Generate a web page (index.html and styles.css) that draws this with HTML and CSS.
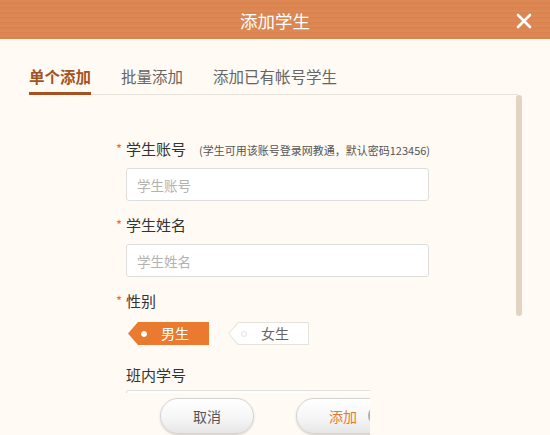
FILE: index.html
```html
<!DOCTYPE html>
<html lang="zh-CN">
<head>
<meta charset="utf-8">
<title>添加学生</title>
<link rel="stylesheet" href="styles.css">
</head>
<body>
<div class="dialog">
  <header class="hd">
    <span></span>
    <h1 class="title">添加学生</h1>
    <button class="close" aria-label="关闭">
      <svg width="16" height="16" viewBox="0 0 16 16"><path d="M2 2 L14 14 M14 2 L2 14" stroke="#fff" stroke-width="2.6" stroke-linecap="round"/></svg>
    </button>
  </header>
  <nav class="tabs">
    <a class="tab active">单个添加</a>
    <a class="tab">批量添加</a>
    <a class="tab">添加已有帐号学生</a>
  </nav>
  <div class="main">
    <form class="form">
      <div class="label"><span class="req">*</span><span>学生账号</span><span class="hint">(学生可用该账号登录网教通，默认密码123456)</span></div>
      <input class="field" placeholder="学生账号">
      <div class="label"><span class="req">*</span><span>学生姓名</span></div>
      <input class="field" placeholder="学生姓名">
      <div class="label"><span class="req">*</span><span>性别</span></div>
      <div class="genders">
        <span class="tag on"><span class="tag-in"><i class="dot"></i>男生</span></span>
        <span class="tag"><span class="tag-in"><i class="dot"></i>女生</span></span>
      </div>
      <div class="label plain"><span class="req"></span><span>班内学号</span></div>
      <input class="field" placeholder="班内学号">
    </form>
    <div class="scrollbar"></div>
  </div>
  <footer class="ft">
    <button class="btn">取消</button>
    <button class="btn primary">添加<i class="spin"></i></button>
  </footer>
  <div class="blank"></div>
</div>
</body>
</html>
```

FILE: styles.css
```css
* { box-sizing: border-box; }
html, body { margin: 0; padding: 0; }
body {
  background: #fffaf3;
  font-family: "Noto Sans CJK SC", "Microsoft YaHei", sans-serif;
  color: #333;
}
.dialog {
  position: relative;
  width: 550px;
  height: 435px;
  overflow: hidden;
  display: flex;
  flex-direction: column;
  background: #fffaf3;
}
.hd {
  height: 39px;
  flex-shrink: 0;
  display: grid;
  grid-template-columns: 1fr auto 1fr;
  align-items: center;
  background-color: #dc8550;
  background-image: repeating-linear-gradient(180deg, rgba(255,255,255,0.035) 0 2px, rgba(120,50,10,0.035) 2px 3px, rgba(255,255,255,0) 3px 5px);
}
.title {
  margin: 0;
  font-size: 17.5px;
  font-weight: normal;
  color: #fff;
  line-height: 39px;
  padding-top: 1px;
}
.close {
  justify-self: end;
  margin-right: 18px;
  width: 16px;
  height: 16px;
  padding: 0;
  border: 0;
  background: none;
  display: block;
  margin-top: 1px;
}
.close svg { display: block; }
.tabs {
  display: flex;
  gap: 30px;
  margin: 0 32px 0 29px;
  padding-top: 27px;
  border-bottom: 1px solid #e8e3da;
  flex-shrink: 0;
}
.tab {
  font-size: 15.5px;
  line-height: 21px;
  color: #666;
  padding-bottom: 5px;
  border-bottom: 3px solid transparent;
  margin-bottom: -1px;
}
.tab.active {
  color: #a4521f;
  font-weight: bold;
  border-bottom-color: #a4521f;
}
.main {
  height: 298px;
  flex-shrink: 0;
  overflow: hidden;
  display: flex;
  align-items: flex-start;
}
.form {
  flex: 1;
  margin: 0;
  padding: 43px 0 0 116px;
  display: flex;
  flex-direction: column;
  align-items: flex-start;
}
.label {
  display: flex;
  align-items: baseline;
  height: 22px;
  font-size: 15px;
  line-height: 22px;
  color: #333;
}
.req {
  width: 10px;
  color: #f0653a;
  font-size: 13px;
  line-height: 12px;
  position: relative;
  top: -1px;
}
.hint {
  font-size: 11px;
  line-height: 12px;
  color: #555;
  margin-left: 13px;
}
.field {
  margin: 8px 0 13px 10px;
  width: 303px;
  height: 33px;
  border: 1px solid #dedede;
  border-radius: 3px;
  background: #fff;
  padding: 0 10px;
  font-family: inherit;
  font-size: 13.5px;
  color: #333;
  outline: none;
}
.field::placeholder { color: #b2b2b2; }
.genders {
  display: flex;
  gap: 19px;
  margin: 10px 0 19px 12px;
}
.tag {
  display: block;
  width: 81px;
  height: 23px;
  padding: 1px;
  background: #e6e2dc;
  clip-path: polygon(10px 0, 100% 0, 100% 100%, 10px 100%, 0 50%);
}
.tag-in {
  display: flex;
  align-items: center;
  height: 100%;
  padding-left: 12px;
  background: #fff;
  color: #666;
  font-size: 14px;
  line-height: 21px;
  clip-path: polygon(9.5px 0, 100% 0, 100% 100%, 9.5px 100%, 0 50%);
}
.dot {
  width: 6px;
  height: 6px;
  border-radius: 50%;
  border: 1px solid #e2e2e2;
  margin-right: 14px;
  flex-shrink: 0;
}
.tag.on { background: #ea7a30; }
.tag.on .tag-in { background: #ea7a30; color: #fff; }
.tag.on .dot { background: #fff; border-color: #fff; }
.label.plain + .field { margin-top: 4px; border-top-color: #e2e0dc; }
.scrollbar {
  width: 6px;
  height: 221px;
  margin-right: 28px;
  border-radius: 3px;
  background: #e2d4c1;
  flex-shrink: 0;
}
.ft {
  width: 370px;
  height: 42px;
  flex-shrink: 0;
  overflow: hidden;
  display: flex;
  gap: 42px;
  padding: 5px 0 0 160px;
  background: #fffaf3;
}
.btn {
  position: relative;
  flex-shrink: 0;
  width: 94px;
  height: 36px;
  border: 1px solid #d4d4d4;
  border-radius: 18px;
  background: linear-gradient(180deg, #ffffff 0%, #f6f6f6 55%, #e6e6e6 100%);
  box-shadow: 0 1px 2px rgba(0,0,0,0.18);
  font-family: inherit;
  font-size: 14px;
  color: #555;
  padding: 0;
}
.btn.primary { color: #e8782e; }
.spin {
  position: absolute;
  left: 71px;
  top: 8px;
  width: 16px;
  height: 17px;
  border-radius: 50%;
  background: #8a8a8a;
  box-shadow: inset 2px 0 2px rgba(255,255,255,0.4);
}
.blank {
  position: absolute;
  left: 370px;
  top: 386px;
  right: 0;
  bottom: 0;
  background: #fffaf3;
}
```
